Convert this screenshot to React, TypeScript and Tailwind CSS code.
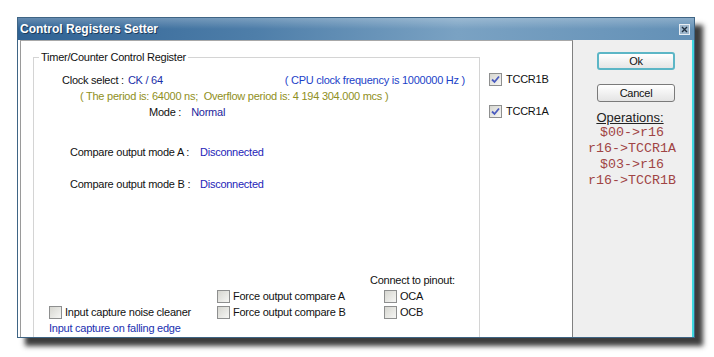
import React from 'react'

const font = "font-['Liberation_Sans',Arial,sans-serif]"

function Box({ checked = false }: { checked?: boolean }) {
  return (
    <span className="w-[13px] h-[13px] shrink-0 border border-[#8e8f8f] bg-[linear-gradient(135deg,#d6d6d0,#f6f6f4)] flex items-center justify-center">
      {checked && (
        <svg width="9" height="9" viewBox="0 0 9 9">
          <path d="M1 4.5 L3.5 7 L8 1.5" fill="none" stroke="#4a5bbf" strokeWidth="1.8" />
        </svg>
      )}
    </span>
  )
}

function Check({ label, checked = false, gap = 'gap-[3px]' }: { label: string; checked?: boolean; gap?: string }) {
  return (
    <div className={`flex items-center h-[16px] ${gap}`}>
      <Box checked={checked} />
      <span className="whitespace-nowrap">{label}</span>
    </div>
  )
}

export default function App() {
  return (
    <div className={`w-[714px] h-[357px] bg-white pt-[17px] pl-[17px] text-[11px] tracking-[-0.25px] text-[#111] ${font}`}>
      <div className="w-[678px] h-[321px] flex flex-col border border-[#3f6585] shadow-[8px_8px_5px_rgba(40,40,40,0.9)]">
        {/* title bar */}
        <div className="h-[22px] flex items-center justify-between pl-[2px] pr-[4px] bg-[linear-gradient(180deg,rgba(255,255,255,0.25)_0%,rgba(255,255,255,0)_50%),linear-gradient(90deg,#2f6294_0%,#4e7ea9_35%,#7aa2c3_65%,#6390b6_100%)]">
          <span className="text-white font-bold text-[12px] tracking-[0px] [text-shadow:1px_1px_0_#1d3d5c]">
            Control Registers Setter
          </span>
          <span className="w-[11px] h-[11px] border border-[#e8eef4] bg-[#9db6cc] flex items-center justify-center">
            <svg width="7" height="7" viewBox="0 0 7 7">
              <path d="M1 1 L6 6 M6 1 L1 6" stroke="#1f2f40" strokeWidth="1.4" />
            </svg>
          </span>
        </div>

        {/* body */}
        <div className="flex flex-1 min-h-0">
          <div className="w-[555px] bg-white pl-[2px] flex">
            <div className="flex-1 border-l border-t border-r border-l-[#9a9a9a] border-t-[#a8a8a8] border-r-[#808080] pl-[12px] pt-[10px] flex overflow-hidden">
              <fieldset className="w-[447px] h-[320px] shrink-0 border border-[#d4d4d4] whitespace-nowrap">
                <legend className="ml-[5px] px-[2px] leading-[13px]">Timer/Counter Control Register</legend>

                <div className="mt-[8px] h-[16px] flex items-center pl-[28px] pr-[14px]">
                  <span>Clock select :</span>
                  <span className="ml-[4px] text-[#1a2fa8]">CK / 64</span>
                  <span className="ml-auto text-[#1c3fc8]">( CPU clock frequency is 1000000 Hz )</span>
                </div>
                <div className="h-[16px] flex items-center pl-[46px] text-[#8f8f22] whitespace-pre">
                  ( The period is: 64000 ns;  Overflow period is: 4 194 304.000 mcs )
                </div>
                <div className="h-[16px] flex items-center pl-[115px]">
                  <span>Mode :</span>
                  <span className="ml-[10px] text-[#1e1e9c]">Normal</span>
                </div>

                <div className="mt-[24px] h-[16px] flex items-center pl-[36px]">
                  <span className="w-[130px]">Compare output mode A :</span>
                  <span className="text-[#2424b8]">Disconnected</span>
                </div>
                <div className="mt-[16px] h-[16px] flex items-center pl-[36px]">
                  <span className="w-[130px]">Compare output mode B :</span>
                  <span className="text-[#2424b8]">Disconnected</span>
                </div>

                <div className="mt-[80px] flex pl-[15px]">
                  <div className="w-[168px] flex flex-col">
                    <div className="h-[32px]" />
                    <Check label="Input capture noise cleaner" />
                    <div className="h-[16px] flex items-center text-[#1a2fb0]">Input capture on falling edge</div>
                  </div>
                  <div className="w-[153px] flex flex-col">
                    <div className="h-[16px]" />
                    <Check label="Force output compare A" />
                    <Check label="Force output compare B" />
                  </div>
                  <div className="flex flex-col">
                    <div className="h-[16px] flex items-center">Connect to pinout:</div>
                    <div className="pl-[14px]">
                      <Check label="OCA" />
                      <Check label="OCB" />
                    </div>
                  </div>
                </div>
              </fieldset>

              <div className="ml-[9px] pt-[20px] flex flex-col gap-[16px]">
                <Check label="TCCR1B" checked gap="gap-[4px]" />
                <Check label="TCCR1A" checked gap="gap-[4px]" />
              </div>
            </div>
          </div>

          {/* right side */}
          <div className="flex-1 bg-[#efefef] border-r-2 border-r-[#3fd8e0] pl-[24px] pt-[12px]">
            <div className="w-[78px] flex flex-col items-center">
              <button className="w-[78px] h-[18px] rounded-[3px] border-2 border-[#5cb6c6] bg-[linear-gradient(180deg,#ffffff,#e6e6e6)] flex items-center justify-center leading-none">
                Ok
              </button>
              <button className="mt-[14px] w-[78px] h-[18px] rounded-[3px] border border-[#7a7a7a] bg-[linear-gradient(180deg,#ffffff,#e4e4e4)] flex items-center justify-center leading-none">
                Cancel
              </button>
              <div className="mt-[9px] h-[14px] -translate-x-[6px] flex items-center text-[13px] tracking-normal underline text-[#222]">
                Operations:
              </div>
              <div className="-translate-x-[4px] font-['Liberation_Mono',monospace] text-[13.3px] tracking-normal text-[#a04444] flex flex-col items-center whitespace-nowrap">
                <div className="h-[16px] flex items-center">$00-&gt;r16</div>
                <div className="h-[16px] flex items-center">r16-&gt;TCCR1A</div>
                <div className="h-[16px] flex items-center">$03-&gt;r16</div>
                <div className="h-[16px] flex items-center">r16-&gt;TCCR1B</div>
              </div>
            </div>
          </div>
        </div>
      </div>
    </div>
  )
}
